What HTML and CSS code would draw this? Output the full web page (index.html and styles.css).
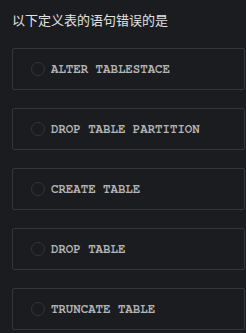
FILE: index.html
```html
<!DOCTYPE html>
<html lang="zh-CN">
<head>
    <meta charset="UTF-8">
    <meta name="viewport" content="width=device-width, initial-scale=1.0">
    <title>选择题</title>
    <link rel="stylesheet" href="styles.css">
</head>
<body>

    <div class="question">
        <h3 class="question-title">以下定义表的语句错误的是</h3>

        <ul class="options">
            <li class="option"><span class="radio"></span><span class="option-text">ALTER TABLESTACE</span></li>
            <li class="option"><span class="radio"></span><span class="option-text">DROP TABLE PARTITION</span></li>
            <li class="option"><span class="radio"></span><span class="option-text">CREATE TABLE</span></li>
            <li class="option"><span class="radio"></span><span class="option-text">DROP TABLE</span></li>
            <li class="option"><span class="radio"></span><span class="option-text">TRUNCATE TABLE</span></li>
        </ul>
    </div>

</body>
</html>
```

FILE: styles.css
```css
body {
    margin: 0;
    padding: 0;
    background-color: #1b1c20;
    font-family: "Liberation Sans", "Noto Sans CJK SC", sans-serif;
}

.question {
    padding: 12px 1px 0 12px;
}

.question-title {
    margin: 0 0 18px 0;
    font-size: 13px;
    font-weight: normal;
    line-height: 18px;
    color: #e2e2e2;
}

.options {
    list-style: none;
    margin: 0;
    padding: 0;
    display: flex;
    flex-direction: column;
    gap: 18px;
}

.option {
    display: flex;
    align-items: center;
    height: 40px;
    padding-left: 18px;
    border: 1px solid #35363a;
    border-radius: 2px;
}

.radio {
    width: 12px;
    height: 12px;
    border: 1px solid #34353a;
    border-radius: 50%;
    margin-right: 6px;
}

.option-text {
    font-family: "Nimbus Mono PS", "FreeMono", "Courier New", Courier, monospace;
    font-size: 12.4px;
    font-weight: bold;
    color: #b4b4b4;
}
```
